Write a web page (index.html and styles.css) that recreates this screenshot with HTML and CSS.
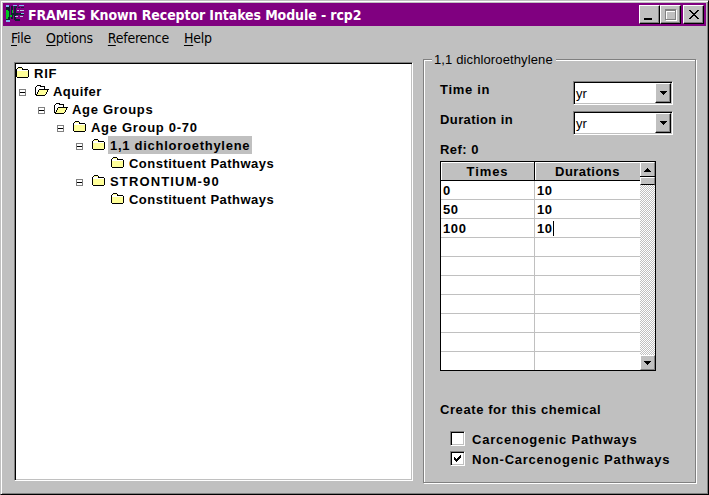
FILE: index.html
```
<!DOCTYPE html>
<html lang="en">
<head>
<meta charset="utf-8">
<title>FRAMES Known Receptor Intakes Module - rcp2</title>
<link rel="stylesheet" href="styles.css">
</head>
<body>
<svg class="defs" width="0" height="0" shape-rendering="crispEdges">
  <symbol id="closed" viewBox="0 0 13 11"><path fill="#000" d="M2 0h4v1h1v1h5v1h1v7h-1v1H1v-1H0V2h1V1h1z"/><path fill="#ffff99" d="M2 1h4v1H2zM1 3h11v7H1z"/><path fill="#fff" d="M1 2h5v1H1zM1 3h11v1H1z"/></symbol>
  <symbol id="open" viewBox="0 0 14 11"><path fill="#000" d="M2 0h4v1h4v3h4v1h-1v2h-1v2h-1v1h-1v1H1v-1H0V2h1V1h1z"/><path fill="#fff" d="M2 1h3v1h4v2H4v1H3v2H2v2H1V2h1z"/><path fill="#ffff99" d="M4 5h8v2h-1v2h-1v1H2V9h1V7h1z"/></symbol>
  <symbol id="minus" viewBox="0 0 7 7"><path fill="#808080" d="M0 0h7v7H0z"/><path fill="#fff" d="M1 1h5v5H1z"/><path d="M1 3h5v1H1z"/></symbol>
  <symbol id="down" viewBox="0 0 7 4"><path d="M0 0h7v1H6v1H5v1H4v1H3V3H2V2H1V1H0z"/></symbol>
  <symbol id="up" viewBox="0 0 7 4"><path d="M3 0h1v1h1v1h1v1h1v1H0V3h1V2h1V1h1z"/></symbol>
</svg>
<div class="window">
  <header class="titlebar">
    <svg class="app" width="20" height="18" viewBox="0 0 20 18" shape-rendering="crispEdges"><path fill="#102030" d="M1 1h4v14H1zM6 1h2v13H6zM9 3h2v12H9zM8 8h11v2H8zM10 14h5v2h-5z"/><path fill="#00c820" d="M1 5h2v1h1v6H3v2H1zM7 5h1v3H7zM5 10h2v2H5z"/><path fill="#80b8f0" d="M1 0h3v2H1zM8 0h4v1H8zM14 0h5v1h-5zM1 15h4v2H1zM16 8h3v1h-3z"/><path fill="#202040" d="M9 1h3v2H9zM13 2h2v1h-2zM16 2h3v1h-3zM13 8h2v2h-2z"/><path fill="#b8c8e0" d="M12 5h2v1h-2zM15 5h4v1h-4zM10 11h3v1h-3zM15 11h3v1h-3z"/></svg>
    <h1>FRAMES Known Receptor Intakes Module - rcp2</h1>
    <div class="controls">
      <span class="raised ctl"><svg width="16" height="14" shape-rendering="crispEdges"><path d="M3 11h8v2H3z"/></svg></span>
      <span class="raised ctl"><svg width="16" height="14" shape-rendering="crispEdges"><path fill="#fff" d="M4 3h11v11H4z"/><path fill="#808080" d="M3 2h11v11H3z"/><path fill="#fff" d="M4 4h9v8H4z"/><path fill="#c0c0c0" d="M5 5h8v7H5z"/></svg></span>
      <span class="raised ctl close"><svg width="16" height="14" shape-rendering="crispEdges"><path d="M4 3h2v1h1v1h1v1h2V5h1V4h1V3h2v1h-1v1h-1v1h-1v1h-1v1h1v1h1v1h1v1h1v1h-2v-1h-1v-1h-1V9H8v1H7v1H6v1H4v-1h1v-1h1V9h1V8h1V7H7V6H6V5H5V4H4z"/></svg></span>
    </div>
  </header>
  <nav class="menu"><span><u>F</u>ile</span><span><u>O</u>ptions</span><span><u>R</u>eference</span><span><u>H</u>elp</span></nav>
  <main>
    <ul class="tree">
      <li class="root"><svg class="folder"><use href="#closed"/></svg><b class="ls8">RIF</b></li>
      <li class="d1"><svg class="minus"><use href="#minus"/></svg><svg class="folder open"><use href="#open"/></svg><b class="ls5">Aquifer</b></li>
      <li class="d2"><svg class="minus"><use href="#minus"/></svg><svg class="folder open"><use href="#open"/></svg><b class="ls7">Age Groups</b></li>
      <li class="d3"><svg class="minus"><use href="#minus"/></svg><svg class="folder"><use href="#closed"/></svg><b class="ls7">Age Group 0-70</b></li>
      <li class="d4"><svg class="minus"><use href="#minus"/></svg><svg class="folder"><use href="#closed"/></svg><b class="ls65 selected">1,1 dichloroethylene</b></li>
      <li class="d5"><svg class="folder"><use href="#closed"/></svg><b class="ls5">Constituent Pathways</b></li>
      <li class="d4"><svg class="minus"><use href="#minus"/></svg><svg class="folder"><use href="#closed"/></svg><b class="ls12">STRONTIUM-90</b></li>
      <li class="d5"><svg class="folder"><use href="#closed"/></svg><b class="ls5">Constituent Pathways</b></li>
    </ul>
    <fieldset>
      <legend>1,1 dichloroethylene</legend>
      <div class="field"><b class="ls7">Time in</b><div class="combo"><span>yr</span><i class="raised"><svg width="7" height="4" shape-rendering="crispEdges"><use href="#down"/></svg></i></div></div>
      <div class="field"><b class="ls4">Duration in</b><div class="combo"><span>yr</span><i class="raised"><svg width="7" height="4" shape-rendering="crispEdges"><use href="#down"/></svg></i></div></div>
      <b class="ref ls5">Ref: 0</b>
      <div class="grid">
        <table>
          <tr><th class="ls9">Times</th><th class="ls5">Durations</th></tr>
          <tr><td>0</td><td>10</td></tr>
          <tr><td>50</td><td>10</td></tr>
          <tr><td>100</td><td>10<span class="caret"></span></td></tr>
          <tr><td></td><td></td></tr>
          <tr><td></td><td></td></tr>
          <tr><td></td><td></td></tr>
          <tr><td></td><td></td></tr>
          <tr><td></td><td></td></tr>
          <tr><td></td><td></td></tr>
          <tr><td></td><td></td></tr>
        </table>
        <div class="scroll">
          <i class="sbtn"><svg width="7" height="4" shape-rendering="crispEdges"><use href="#up"/></svg></i>
          <i class="thumb"></i>
          <i class="sbtn last"><svg width="7" height="4" shape-rendering="crispEdges"><use href="#down"/></svg></i>
        </div>
      </div>
      <b class="create ls6">Create for this chemical</b>
      <div class="check"><i></i><b class="ls75">Carcenogenic Pathways</b></div>
      <div class="check"><i><svg width="7" height="7" shape-rendering="crispEdges"><path d="M0 2h1v1h1v1h1V3h1V2h1V1h1V0h1v3H6v1H5v1H4v1H3v1H2V6H1V5H0z"/></svg></i><b class="ls75">Non-Carcenogenic Pathways</b></div>
    </fieldset>
  </main>
</div>
</body>
</html>
```
FILE: styles.css
```
* { box-sizing: border-box; }
body { margin: 0; background: #c0c0c0; font: 13px/18px "Liberation Sans", Arial, sans-serif; color: #000; overflow: hidden; }
svg { display: block; flex: none; }
.defs { position: absolute; }
b { white-space: nowrap; }
.window {
  width: 709px; height: 495px; padding: 1px; background: #c0c0c0;
  border: 1px solid; border-color: #c0c0c0 #000 #000 #c0c0c0;
  box-shadow: inset 1px 1px #fff, inset -1px -1px #808080;
}
.titlebar { height: 23px; margin: 1px 1px 0; padding: 2px 2px 0 2px; background: #800080; display: flex; }
.app { margin-right: 3px; }
h1 { margin: 0; flex: 1; font: bold 14px/20px "DejaVu Sans Condensed", sans-serif; letter-spacing: -0.1px; color: #fff; white-space: nowrap; }
.controls { display: flex; }
.raised { background: #c0c0c0; border: 1px solid; border-color: #fff #000 #000 #fff; box-shadow: inset -1px -1px #808080; }
.ctl { width: 21px; height: 19px; padding: 1px; }
.close { margin-left: 2px; }
.menu { height: 36px; padding: 1px 0 0 9px; display: flex; gap: 15px; font: 14px/22px "DejaVu Sans Condensed", sans-serif; letter-spacing: -0.25px; }
.menu u { text-underline-offset: 2px; text-decoration-thickness: 1px; }
main { display: flex; align-items: flex-start; padding-left: 12px; }
.tree {
  width: 399px; height: 419px; margin: 0; padding: 1px 0 0 1px; list-style: none; background: #fff;
  border: 1px solid; border-color: #808080 #fff #fff #808080;
  box-shadow: inset 1px 1px #000, inset -1px -1px #c0c0c0;
}
.tree li { height: 18px; display: flex; }
.folder { width: 13px; height: 11px; margin: 3px 3px 0 0; shape-rendering: crispEdges; }
.folder.open { width: 14px; margin-right: 2px; }
.minus { width: 7px; height: 7px; margin: 7px 9px 0 0; shape-rendering: crispEdges; }
.tree b { height: 18px; padding: 0 2px; line-height: 20px; }
.tree .selected { background: #c0c0c0; }
.d1 { padding-left: 3px; }
.d2 { padding-left: 22px; }
.d3 { padding-left: 41px; }
.d4 { padding-left: 60px; }
.d5 { padding-left: 95px; }
.ls4 { letter-spacing: .4px; }
.ls5 { letter-spacing: .47px; }
.ls6 { letter-spacing: .58px; }
.ls65 { letter-spacing: .73px; }
.ls7 { letter-spacing: .7px; }
.ls75 { letter-spacing: .76px; }
.ls8 { letter-spacing: .8px; }
.ls9 { letter-spacing: .9px; }
.ls12 { letter-spacing: 1.15px; }
fieldset {
  width: 273px; height: 424px; min-width: 0; margin: -3px 0 0 10px; padding: 21px 0 0 16px; position: relative;
  border: 1px solid #808080; box-shadow: inset 1px 1px #fff, 1px 1px #fff;
  display: flex; flex-direction: column;
}
legend { position: absolute; left: 8px; top: -10px; padding: 0 3px 0 2px; background: #c0c0c0; letter-spacing: .12px; line-height: 20px; white-space: nowrap; }
.field { height: 30px; display: flex; justify-content: space-between; padding-right: 22px; }
.combo {
  width: 100px; height: 24px; padding: 1px; display: flex; background: #fff;
  border: 1px solid; border-color: #808080 #fff #fff #808080;
  box-shadow: inset 1px 1px #000, inset -1px -1px #c0c0c0;
}
.combo span { flex: 1; padding-left: 1px; line-height: 21px; }
.combo i { width: 16px; height: 20px; display: flex; align-items: center; justify-content: center; }
.ref { height: 20px; }
.grid { width: 216px; height: 210px; border: 1px solid #000; display: flex; align-items: flex-start; background: #fff; overflow: hidden; }
table { width: 199px; border-collapse: separate; border-spacing: 0; table-layout: fixed; font-weight: bold; line-height: 17px; letter-spacing: .6px; }
th, td { height: 19px; padding: 0 2px; border-right: 1px solid #c0c0c0; border-bottom: 1px solid #c0c0c0; text-align: left; }
th { background: #c0c0c0; border-color: #000; text-align: center; box-shadow: inset 1px 1px #fff; }
th:first-child { width: 94px; }
th:last-child, td:last-child { border-right: 0; }
tr:last-child td { border-bottom-color: #fff; }
.caret { display: inline-block; width: 1px; height: 15px; background: #000; vertical-align: top; margin-top: 1px; }
.scroll {
  width: 15px; height: 208px; display: flex; flex-direction: column;
  background: repeating-conic-gradient(#c0c0c0 0 25%, #fff 0 50%) 0 0 / 2px 2px;
}
.sbtn { height: 15px; display: flex; align-items: center; justify-content: center; background: #c0c0c0; border: 1px solid; border-color: #fff #808080 #808080 #fff; }
.thumb { height: 8px; background: #c0c0c0; border: 1px solid; border-color: #fff #808080 #000 #fff; box-shadow: 0 -1px #000; }
.last { margin-top: auto; }
.create { margin: 30px 0 12px; height: 18px; }
.check { height: 20px; padding-left: 10px; display: flex; }
.check i { width: 15px; height: 15px; margin: 0 7px 0 0; padding: 3px; background: #fff; border: 1px solid; border-color: #808080 #fff #fff #808080; box-shadow: inset 1px 1px #000, inset -1px -1px #c0c0c0; }
```
